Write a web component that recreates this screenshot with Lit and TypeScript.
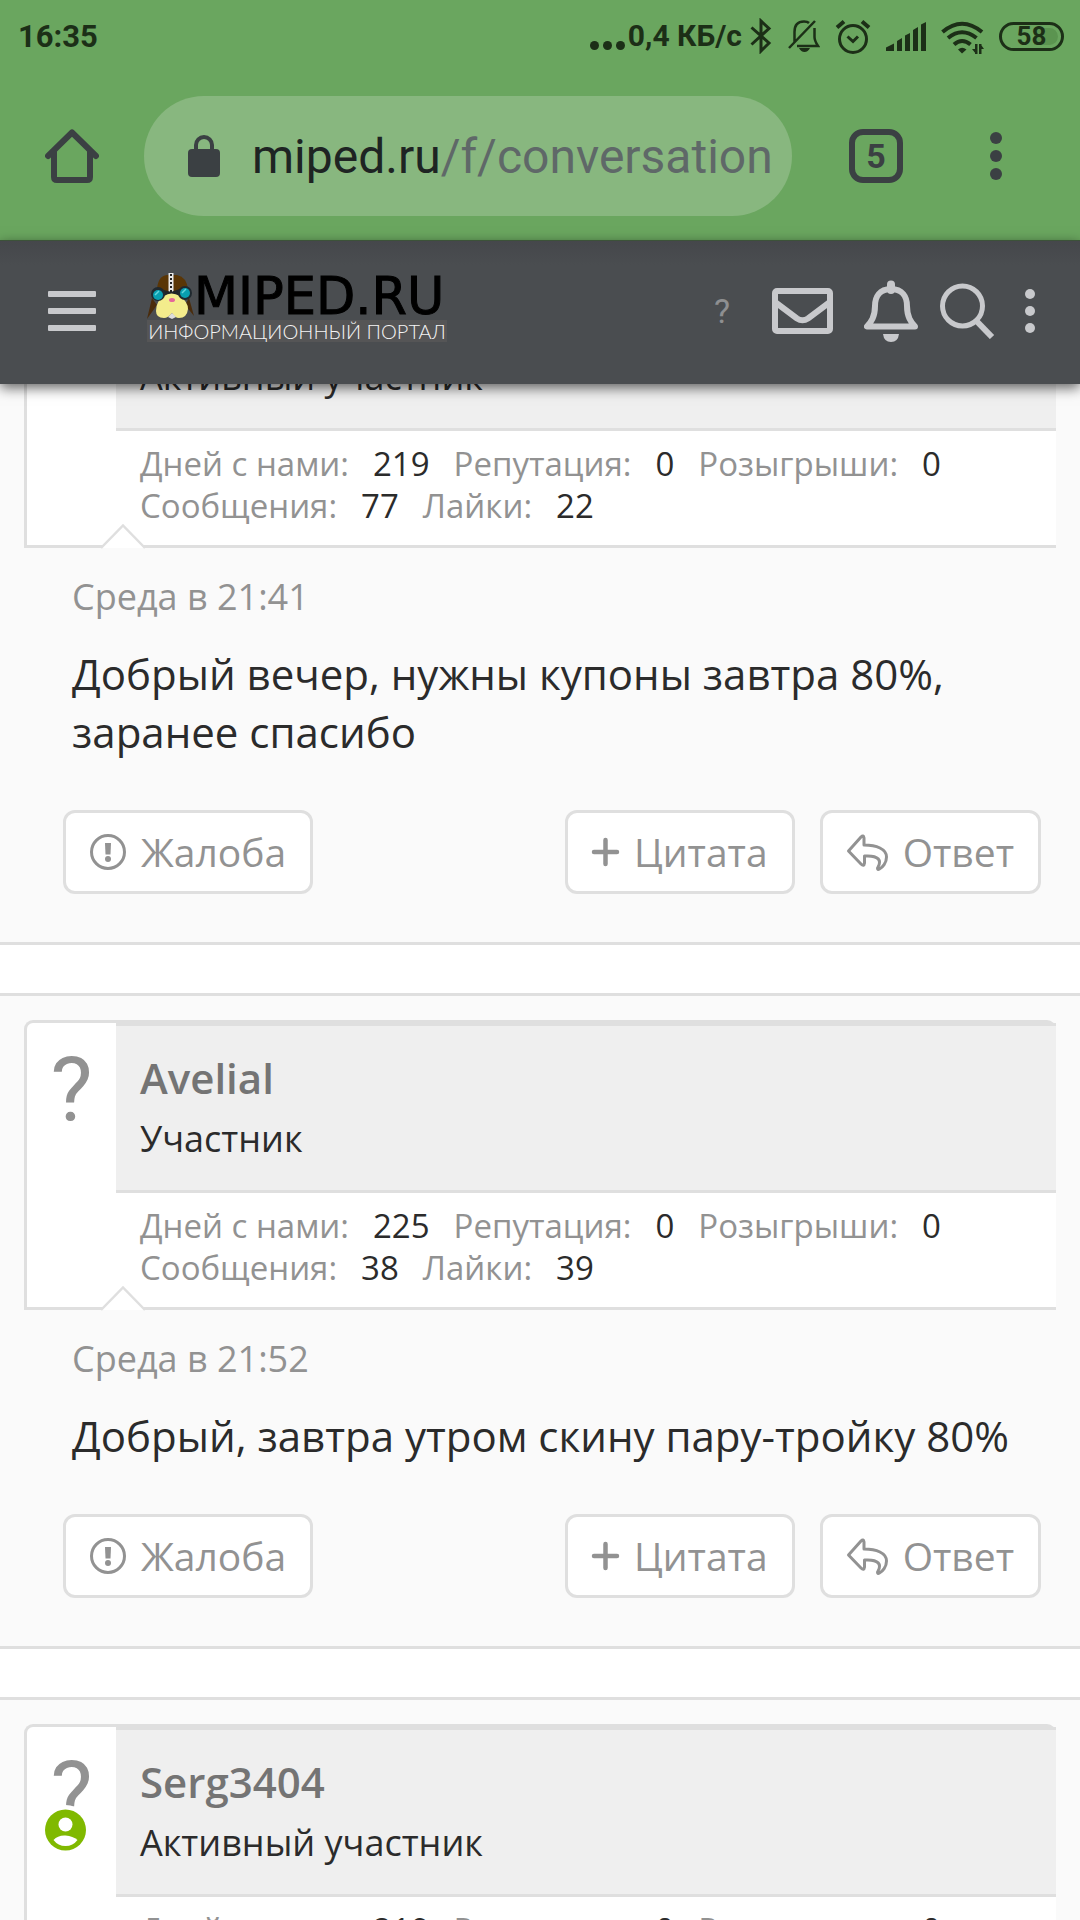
import { LitElement, html, css, svg, nothing, type TemplateResult } from "lit";
import { customElement, property } from "lit/decorators.js";

interface Stat {
  label: string;
  value: string;
}

interface Post {
  author?: string;
  rank: string;
  online?: boolean;
  stats: Stat[];
  date?: string;
  text?: string;
}

const posts: Post[] = [
  {
    rank: "Активный участник",
    stats: [
      { label: "Дней с нами:", value: "219" },
      { label: "Репутация:", value: "0" },
      { label: "Розыгрыши:", value: "0" },
      { label: "Сообщения:", value: "77" },
      { label: "Лайки:", value: "22" },
    ],
    date: "Среда в 21:41",
    text: "Добрый вечер, нужны купоны завтра 80%, заранее спасибо",
  },
  {
    author: "Avelial",
    rank: "Участник",
    stats: [
      { label: "Дней с нами:", value: "225" },
      { label: "Репутация:", value: "0" },
      { label: "Розыгрыши:", value: "0" },
      { label: "Сообщения:", value: "38" },
      { label: "Лайки:", value: "39" },
    ],
    date: "Среда в 21:52",
    text: "Добрый, завтра утром скину пару-тройку 80%",
  },
  {
    author: "Serg3404",
    rank: "Активный участник",
    online: true,
    stats: [
      { label: "Дней с нами:", value: "219" },
      { label: "Репутация:", value: "0" },
      { label: "Розыгрыши:", value: "0" },
    ],
  },
];

const icon = (w: number, h: number, body: TemplateResult) =>
  html`<svg width=${w} height=${h} viewBox="0 0 ${w} ${h}" fill="none" aria-hidden="true">${body}</svg>`;

@customElement("status-bar")
class StatusBar extends LitElement {
  static styles = css`
    :host {
      display: flex;
      align-items: center;
      height: 72px;
      padding: 0 16px 0 18px;
      box-sizing: border-box;
      color: #1c2f17;
      font: 700 31px/40px Roboto, sans-serif;
      white-space: nowrap;
    }
    .time { flex: 1; padding-top: 2px; }
    .speed { font-size: 30px; margin: 0 8px 0 3px; }
    .icons { display: flex; align-items: center; gap: 15px; }
    .dots { display: flex; gap: 4px; padding-top: 18px; }
    .dots i { width: 9px; height: 9px; border-radius: 50%; background: currentColor; }
    .battery {
      box-sizing: border-box;
      width: 65px;
      height: 29px;
      border: 3px solid currentColor;
      border-radius: 15px;
      font-size: 26px;
      line-height: 23px;
      text-align: center;
      background: linear-gradient(90deg, transparent 55%, #5b9450 55%) content-box;
      padding: 3px;
      display: grid;
      place-content: center;
    }
    svg { display: block; }
  `;
  render() {
    return html`
      <span class="time">16:35</span>
      <span class="dots"><i></i><i></i><i></i></span>
      <span class="speed">0,4 КБ/с</span>
      <span class="icons">
        ${icon(22, 36, svg`<path d="M1.500 9.500 19 25 11 33V3L19 10.500 1.500 26.500" stroke="currentColor" stroke-width="3"/>`)}
        ${icon(33, 36, svg`<path d="M7.500 24V14C7.500 7 11 3.500 17 3.500 19 3.500 21 4 22 5M27.500 10V19C27.500 22 29 25 31 28H10M2 30 28 3" stroke="currentColor" stroke-width="2.500"/><path d="M12 30H23Q21 34 17.500 34T12 30Z" fill="currentColor"/>`)}
        ${icon(36, 36, svg`<circle cx="18" cy="21" r="13.500" stroke="currentColor" stroke-width="3"/><path d="M12.500 18.500 18 23.500 23 18.500" stroke="currentColor" stroke-width="3"/><path d="M2 9.500 9 3.500M34 9.500 27 3.500" stroke="currentColor" stroke-width="4"/>`)}
        ${icon(40, 36, svg`<path d="M0 29.500 8 25.500V33H0ZM11 23 16 20V33H11ZM19 17.500 24 15V33H19ZM27 12 32 9V33H27ZM35 6.500 40 4V33H35Z" fill="currentColor"/>`)}
        ${icon(43, 36, svg`<path d="M1.500 14Q21 -2.500 41 14M7 20Q21 8.500 35.500 20M13 26.500Q21 19.500 29.500 26.500" stroke="currentColor" stroke-width="4"/><path d="M17 31.500Q21 28 25.500 31.500L21 35.500ZM34 36V26H36.500V36ZM38 26H40.500V36H38ZM31 31H36.500V36H35ZM38 26H39.500L43 31H38Z" fill="currentColor"/>`)}
        <span class="battery">58</span>
      </span>
    `;
  }
}

@customElement("browser-bar")
class BrowserBar extends LitElement {
  static styles = css`
    :host {
      display: flex;
      align-items: center;
      height: 168px;
      padding: 0 78px 0 45px;
      box-sizing: border-box;
      color: #3b4043;
    }
    button {
      border: 0;
      margin: 0;
      padding: 0;
      background: none;
      color: inherit;
      font: inherit;
    }
    svg { display: block; }
    .url {
      flex: 1;
      min-width: 0;
      height: 120px;
      margin: 0 57px 0 45px;
      padding: 0 20px 0 44px;
      border-radius: 60px;
      background: #88b77f;
      display: flex;
      align-items: center;
      gap: 32px;
      text-align: left;
    }
    .address {
      flex: 1;
      overflow: hidden;
      white-space: nowrap;
      color: #5f6868;
      font: 400 48px/60px Roboto, sans-serif;
      padding-top: 2px;
    }
    .host { color: #1e2423; }
    .tabs {
      box-sizing: border-box;
      width: 54px;
      height: 54px;
      border: 6px solid currentColor;
      border-radius: 14px;
      font: 700 34px/42px Roboto, sans-serif;
      margin-right: 87px;
    }
  `;
  render() {
    return html`
      <button aria-label="Домой">
        ${icon(54, 54, svg`<path d="M3 27 27 3.500 51 27M9 22V48Q9 51 12 51H42Q45 51 45 48V22" stroke="currentColor" stroke-width="6" stroke-linecap="round" stroke-linejoin="round"/>`)}
      </button>
      <button class="url">
        ${icon(32, 42, svg`<rect y="14" width="32" height="28" rx="4" fill="currentColor"/><path d="M8 16V10a8 8 0 0 1 16 0V16" stroke="currentColor" stroke-width="4"/>`)}
        <span class="address"><span class="host">miped.ru</span>/f/conversation</span>
      </button>
      <button class="tabs">5</button>
      <button aria-label="Меню">
        ${icon(12, 48, svg`<g fill="currentColor"><circle cx="6" cy="6" r="6"/><circle cx="6" cy="24" r="6"/><circle cx="6" cy="42" r="6"/></g>`)}
      </button>
    `;
  }
}

@customElement("site-header")
class SiteHeader extends LitElement {
  static styles = css`
    :host {
      display: flex;
      align-items: center;
      height: 144px;
      padding: 0 45px 3px 48px;
      box-sizing: border-box;
      color: #c8c9cc;
      border-top: 1px solid #3c5239;
      background: linear-gradient(#45474b, #4a4d50 24px);
      box-shadow: 0 4px 12px rgba(0, 0, 0, 0.6);
    }
    button {
      border: 0;
      margin: 0;
      padding: 0;
      background: none;
      color: inherit;
      font: inherit;
    }
    svg { display: block; }
    .logo {
      margin: 0 auto 0 51px;
      padding-bottom: 6px;
      text-decoration: none;
      white-space: nowrap;
    }
    .brand {
      display: flex;
      align-items: flex-end;
      height: 46px;
      color: #000;
      font: 400 51px/46px "DejaVu Sans", sans-serif;
      -webkit-text-stroke: 1px #000;
    }
    .tagline {
      width: 300px;
      background: #555556;
      color: #f4f4f4;
      text-align: center;
      font: 300 20px/22px Lato, "Open Sans", sans-serif;
    }
    .help { color: #8e8f91; font: 400 34px/40px Roboto, sans-serif; margin-right: 42px; }
    .mail { margin-right: 31px; }
    .bell { margin-right: 22px; }
    .search { margin-right: 30px; }
  `;
  render() {
    return html`
      <button aria-label="Навигация">
        ${icon(48, 42, svg`<g fill="currentColor"><rect y="1" width="48" height="6" rx="1"/><rect y="18" width="48" height="6" rx="1"/><rect y="35" width="48" height="6" rx="1"/></g>`)}
      </button>
      <a class="logo" href="#">
        <span class="brand">
          ${icon(47, 47, svg`
            <path d="M5 25 0 46 10 32ZM42 25 47 43 38 32Z" fill="#4a2c0c"/>
            <path d="M10 19Q10 3 20 2H30Q40 4 41 17L34 24H14Z" fill="#5a3606"/>
            <path d="M24 0V20" stroke="#e9e9e9" stroke-width="5"/>
            <path d="M24 1V20" stroke="#222" stroke-width="2" stroke-dasharray="2 2"/>
            <path d="M12 19 24 22 36 18" stroke="#202428" stroke-width="6"/>
            <path d="M9 38Q9 28 17 23 24 18 33 23 41 29 41 36 40 45 32 45 28 45 25 40 21 45 17 45 9 45 9 38Z" fill="#f3ec8c"/>
            <path d="M21 44 25 40 29 44 25 46Z" fill="#ddd"/>
            <ellipse cx="25" cy="27" rx="3" ry="2" fill="#e5679a"/>
            <circle cx="11" cy="21" r="7" fill="#20292f"/><circle cx="11" cy="22" r="5" fill="#089fb0"/>
            <circle cx="38" cy="20" r="7" fill="#20292f"/><circle cx="38" cy="20" r="5" fill="#089fb0"/>
            <path d="M8 22 12 18M35 20 39 16" stroke="#62d4dc" stroke-width="1.500"/>`)}
          <span>MIPED.RU</span>
        </span>
        <div class="tagline">ИНФОРМАЦИОННЫЙ ПОРТАЛ</div>
      </a>
      <button class="help">?</button>
      <button class="mail" aria-label="Сообщения">
        ${icon(61, 46, svg`<rect x="3" y="3" width="55" height="40" rx="2" stroke="currentColor" stroke-width="6"/><path d="M3 14 25 30.500Q30.500 34 36 30.500L58 14" stroke="currentColor" stroke-width="6"/>`)}
      </button>
      <button class="bell" aria-label="Уведомления">
        ${icon(54, 62, svg`<path d="M27 9C15.500 9 11 17 11 26 11 37 7 42 3 46.500H51C47 42 43 37 43 26 43 17 38.500 9 27 9Z" stroke="currentColor" stroke-width="6" stroke-linejoin="round"/><path d="M27 10V4.500" stroke="currentColor" stroke-width="8" stroke-linecap="round"/><path d="M19 54H35Q34 62 27 62T19 54Z" fill="currentColor"/>`)}
      </button>
      <button class="search" aria-label="Поиск">
        ${icon(55, 56, svg`<circle cx="22.500" cy="23" r="20" stroke="currentColor" stroke-width="5"/><path d="M36 37.500 52 54" stroke="currentColor" stroke-width="6"/>`)}
      </button>
      <button aria-label="Ещё">
        ${icon(10, 44, svg`<g fill="currentColor"><circle cx="5" cy="5" r="5"/><circle cx="5" cy="22" r="5"/><circle cx="5" cy="39" r="5"/></g>`)}
      </button>
    `;
  }
}

@customElement("forum-post")
class ForumPost extends LitElement {
  @property({ attribute: false }) post!: Post;

  static styles = css`
    :host {
      display: block;
      flex: none;
      background: #fafafa;
      border-top: 3px solid #dfdfdf;
      border-bottom: 3px solid #dfdfdf;
      padding: 24px 24px 48px;
      color: #2b2b2b;
      font-family: "Open Sans", "Noto Sans", sans-serif;
    }
    .card {
      position: relative;
      display: grid;
      grid-template-columns: 89px 1fr;
      background: #fff;
      border: 3px solid #dfdfdf;
      border-right: 0;
      border-radius: 9px 9px 0 0;
    }
    .avatar {
      position: relative;
      padding-top: 22px;
      text-align: center;
      font: 400 89px/89px Roboto, sans-serif;
      color: #929292;
    }
    .badge {
      position: absolute;
      left: 15px;
      top: 79px;
    }
    .who {
      background: #efefef;
      border-top: 3px solid #dfdfdf;
      border-bottom: 3px solid #dfdfdf;
      padding: 23px 24px 26px;
    }
    .name {
      margin: 0 0 7px;
      height: 58px;
      font-size: 42px;
      line-height: 58px;
      font-weight: 600;
    }
    .name a { color: #747474; text-decoration: none; }
    .rank { font-size: 36px; line-height: 50px; }
    .stats {
      display: flex;
      flex-wrap: wrap;
      column-gap: 24px;
      margin: 0;
      padding: 12px 24px 18px;
      font-size: 33px;
      line-height: 42px;
    }
    .stat { display: flex; gap: 24px; }
    .stat dt { color: #929292; }
    .stat dd { margin: 0; }
    .notch { position: absolute; left: 74px; bottom: -3px; }
    .date { padding: 24px 48px 23px; color: #929292; font-size: 36px; line-height: 50px; }
    .text { margin: 0 24px 49px 48px; font-size: 42px; line-height: 58px; }
    .actions { display: flex; gap: 25px; margin: 0 15px 0 39px; }
    .actions button {
      display: flex;
      align-items: center;
      gap: 15px;
      box-sizing: border-box;
      height: 84px;
      padding: 0 24px;
      border: 3px solid #dfdfdf;
      border-radius: 12px;
      background: #fff;
      color: #929292;
      font: 400 39px/54px "Open Sans", "Noto Sans", sans-serif;
      white-space: nowrap;
    }
    .actions .report { margin-right: auto; }
    svg { display: block; overflow: visible; }
  `;

  render() {
    const p = this.post;
    return html`
      <article>
        <header class="card">
          <div class="avatar">
            ?
            ${p.online
              ? html`<span class="badge">${icon(47, 48, svg`<circle cx="23.500" cy="24" r="25" fill="#fff"/><circle cx="23.500" cy="24" r="20.500" fill="#80b900"/><circle cx="23.500" cy="18.500" r="7" fill="#fff"/><path d="M11.500 34Q16 29 23.500 29.500T35.500 34Q31 40 23.500 40T11.500 34Z" fill="#fff"/>`)}</span>`
              : nothing}
          </div>
          <div>
            <div class="who">
              <h3 class="name">${p.author ? html`<a href="#">${p.author}</a>` : nothing}</h3>
              <div class="rank">${p.rank}</div>
            </div>
            <dl class="stats">
              ${p.stats.map((s) => html`<div class="stat"><dt>${s.label}</dt><dd>${s.value}</dd></div>`)}
            </dl>
          </div>
          <span class="notch">
            ${icon(44, 24, svg`<path d="M0 24 22 1.500 44 24Z" fill="#fff"/><path d="M0 24 22 1.500 44 24" stroke="#dfdfdf" stroke-width="2.500"/>`)}
          </span>
        </header>
        ${p.text
          ? html`
              <div class="date">${p.date}</div>
              <p class="text">${p.text}</p>
              <footer class="actions">
                <button class="report">
                  ${icon(36, 36, svg`<circle cx="18" cy="18" r="16.500" stroke="currentColor" stroke-width="3"/><path d="M15 9H21L20.500 20.500H15.500Z" fill="currentColor"/><circle cx="18" cy="25" r="3" fill="currentColor"/>`)}
                  Жалоба
                </button>
                <button>
                  ${icon(27, 28, svg`<path d="M13.500 2V26M2 14H25" stroke="currentColor" stroke-width="4.500" stroke-linecap="round"/>`)}
                  Цитата
                </button>
                <button>
                  ${icon(41, 37, svg`<path d="M1.500 17 14 3Q16.500 .5 17 4V11C29.500 11 39.500 15 39.500 23 39.500 29 35.500 33.500 32.500 35 30.500 36 30 34.500 31 33 34.500 27 32.500 21 17.500 22V29Q17 33 14 30Z" stroke="currentColor" stroke-width="3" stroke-linejoin="round"/>`)}
                  Ответ
                </button>
              </footer>
            `
          : nothing}
      </article>
    `;
  }
}

@customElement("app-root")
class AppRoot extends LitElement {
  static styles = css`
    :host {
      display: flex;
      flex-direction: column;
      height: 100vh;
      overflow: hidden;
      background: #fff;
    }
    .top { position: relative; z-index: 1; flex: none; background: #6aa65f; }
    .thread {
      flex: 1;
      min-height: 0;
      display: flex;
      flex-direction: column;
      gap: 48px;
      margin-top: -153px;
    }
  `;
  render() {
    return html`
      <div class="top">
        <status-bar></status-bar>
        <browser-bar></browser-bar>
        <site-header></site-header>
      </div>
      <main class="thread">
        ${posts.map((p) => html`<forum-post .post=${p}></forum-post>`)}
      </main>
    `;
  }
}
